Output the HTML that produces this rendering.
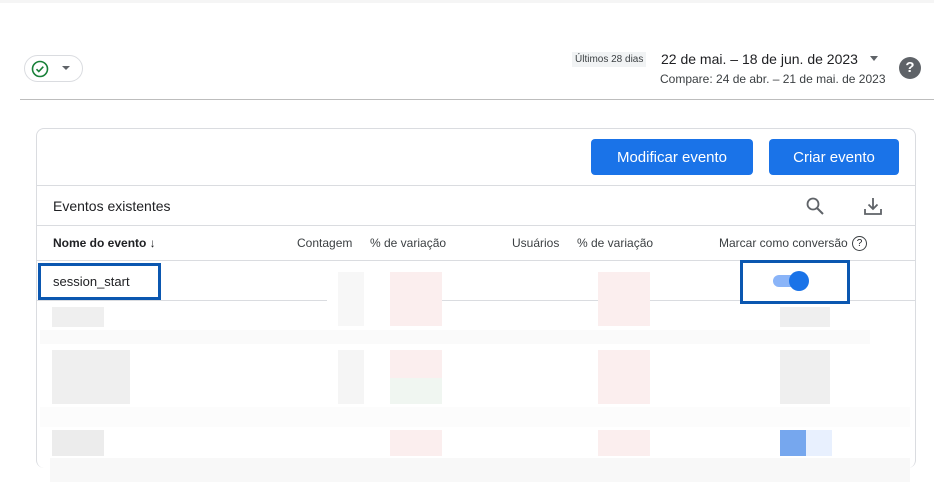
<!DOCTYPE html>
<html><head><meta charset="utf-8"><style>
*{margin:0;padding:0;box-sizing:border-box}
body{width:934px;height:482px;background:#fff;font-family:"Liberation Sans",sans-serif;color:#202124;position:relative;overflow:hidden}
.a{position:absolute}
.t{position:absolute;white-space:nowrap}
.btn{position:absolute;background:#1a73e8;color:#fff;font-size:15px;border-radius:4px;display:flex;align-items:center;justify-content:center}
.h{font-size:12px;color:#3c4043}
.b{position:absolute}
</style></head><body>
<div class="a" style="left:0;top:0;width:934px;height:3px;background:#f5f5f5"></div>
<div class="a" style="left:24px;top:55px;width:59px;height:27px;border:1px solid #dadce0;border-radius:14px"></div>
<svg class="a" style="left:31px;top:60px" width="18" height="18" viewBox="0 0 18 18"><circle cx="9" cy="9" r="7.5" fill="none" stroke="#188038" stroke-width="1.6"/><path d="M5.5 9.2l2.3 2.3 4.5-4.8" fill="none" stroke="#188038" stroke-width="1.6"/></svg>
<div class="a" style="left:62px;top:66px;border-left:4px solid transparent;border-right:4px solid transparent;border-top:4px solid #5f6368"></div>
<div class="t" style="left:572px;top:52px;background:#f1f3f4;font-size:10px;padding:2px 3px;color:#3c4043">Últimos 28 dias</div>
<div class="t" style="left:661px;top:51px;font-size:14px;color:#202124">22 de mai. – 18 de jun. de 2023</div>
<div class="a" style="left:870px;top:56px;border-left:4px solid transparent;border-right:4px solid transparent;border-top:5px solid #5f6368"></div>
<div class="t" style="left:660px;top:72px;font-size:12px;color:#3c4043">Compare: 24 de abr. – 21 de mai. de 2023</div>
<div class="a" style="left:899px;top:57px;width:22px;height:22px;border-radius:50%;background:#5f6368;color:#fff;font-size:15px;font-weight:bold;text-align:center;line-height:22px">?</div>
<div class="a" style="left:20px;top:99px;width:914px;height:1px;background:#bdbdbd"></div>

<div class="a" style="left:36px;top:128px;width:880px;height:340px;border:1px solid #dadce0;border-radius:8px;border-bottom:none"></div>
<div class="btn" style="left:591px;top:139px;width:162px;height:36px">Modificar evento</div>
<div class="btn" style="left:769px;top:139px;width:130px;height:36px">Criar evento</div>
<div class="a" style="left:37px;top:185px;width:878px;height:1px;background:#dadce0"></div>
<div class="t" style="left:53px;top:198px;font-size:14px">Eventos existentes</div>
<svg class="a" style="left:805px;top:196px" width="20" height="20" viewBox="0 0 20 20"><circle cx="8" cy="8" r="5.5" fill="none" stroke="#5f6368" stroke-width="1.8"/><path d="M12 12l6 6" stroke="#5f6368" stroke-width="2"/></svg>
<svg class="a" style="left:862px;top:195px" width="22" height="22" viewBox="0 0 22 22"><path d="M11 3v11M6.5 9.5L11 14l4.5-4.5M3 14v5h16v-5" fill="none" stroke="#5f6368" stroke-width="1.8"/></svg>
<div class="a" style="left:37px;top:225px;width:878px;height:1px;background:#dadce0"></div>
<div class="t" style="left:53px;top:236px;font-size:12px;font-weight:bold">Nome do evento ↓</div>
<div class="t h" style="left:297px;top:236px">Contagem</div>
<div class="t h" style="left:370px;top:236px">% de variação</div>
<div class="t h" style="left:512px;top:236px">Usuários</div>
<div class="t h" style="left:577px;top:236px">% de variação</div>
<div class="t h" style="left:719px;top:236px">Marcar como conversão</div>
<div class="a" style="left:852px;top:236px;width:15px;height:15px;border:1.3px solid #3c4043;border-radius:50%;font-size:10px;text-align:center;line-height:13px">?</div>
<div class="a" style="left:37px;top:260px;width:878px;height:1px;background:#dadce0"></div>
<div class="a" style="left:37px;top:300px;width:290px;height:1px;background:#dadce0"></div>
<div class="a" style="left:400px;top:300px;width:515px;height:1px;background:#dadce0"></div>
<div class="a" style="left:38px;top:263px;width:123px;height:37px;border:3px solid #0b57b0"></div>
<div class="t" style="left:53px;top:274px;font-size:13px">session_start</div>
<div class="a" style="left:740px;top:260px;width:110px;height:44px;border:3px solid #0b57b0;background:#fff"></div>
<div class="a" style="left:773px;top:275px;width:28px;height:12px;border-radius:6px;background:#8ab4f8"></div>
<div class="a" style="left:789px;top:271px;width:20px;height:20px;border-radius:50%;background:#1a73e8"></div>

<div class="b" style="left:390px;top:272px;width:52px;height:54px;background:#fbeeee"></div>
<div class="b" style="left:598px;top:272px;width:52px;height:54px;background:#fbeeee"></div>
<div class="b" style="left:338px;top:272px;width:26px;height:54px;background:#f7f7f7"></div>
<div class="b" style="left:52px;top:307px;width:52px;height:20px;background:#efefef"></div>
<div class="b" style="left:780px;top:307px;width:50px;height:20px;background:#efefef"></div>
<div class="b" style="left:40px;top:330px;width:830px;height:14px;background:#fafafa"></div>
<div class="b" style="left:52px;top:350px;width:78px;height:54px;background:#efefef"></div>
<div class="b" style="left:338px;top:350px;width:26px;height:54px;background:#f5f5f5"></div>
<div class="b" style="left:390px;top:350px;width:52px;height:28px;background:#fbeeee"></div>
<div class="b" style="left:390px;top:378px;width:52px;height:26px;background:#f0f6f1"></div>
<div class="b" style="left:598px;top:350px;width:52px;height:54px;background:#fbeeee"></div>
<div class="b" style="left:780px;top:350px;width:50px;height:54px;background:#efefef"></div>
<div class="b" style="left:40px;top:407px;width:870px;height:20px;background:#fcfcfc"></div>
<div class="b" style="left:52px;top:430px;width:52px;height:26px;background:#ececec"></div>
<div class="b" style="left:390px;top:430px;width:52px;height:26px;background:#fbeeee"></div>
<div class="b" style="left:598px;top:430px;width:52px;height:26px;background:#fbeeee"></div>
<div class="b" style="left:780px;top:430px;width:26px;height:26px;background:#76a7ee"></div>
<div class="b" style="left:806px;top:430px;width:26px;height:26px;background:#e8f0fe"></div>
<div class="b" style="left:50px;top:458px;width:860px;height:24px;background:#f8f8f8"></div>
</body></html>
